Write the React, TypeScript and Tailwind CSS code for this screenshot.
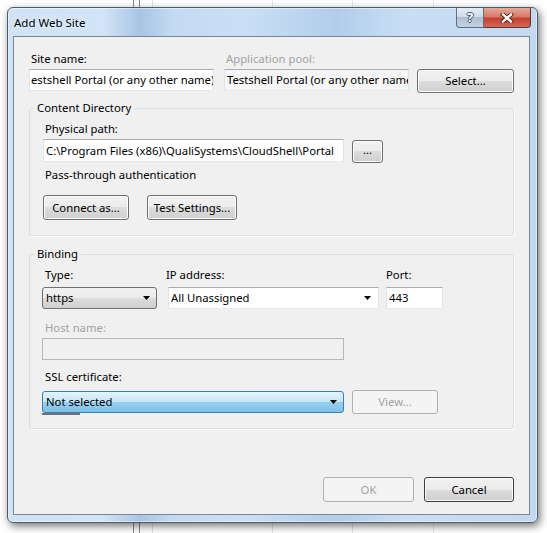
import React from 'react';

const inputBorder = 'border border-t-[#abadb3] border-x-[#e2e3ea] border-b-[#e3e9ef]';
const btn =
  'flex items-center justify-center rounded-[3px] border border-[#707070] bg-[linear-gradient(#f2f2f2,#ebebeb_50%,#dddddd_50%,#cfcfcf)] shadow-[inset_0_0_0_1px_#fcfcfc] text-black';
const btnOff = 'flex items-center justify-center rounded-[3px] border border-[#adb2b5] bg-[#f4f4f4] text-[#a3a3a3]';

const Arrow = () => (
  <svg width="7" height="4" viewBox="0 0 7 4" className="shrink-0">
    <polygon points="0,0 7,0 3.5,4" fill="#000" />
  </svg>
);

const GroupBox = ({ title, className, children }: { title: string; className: string; children: React.ReactNode }) => (
  <fieldset className={`rounded-[3px] border border-[#d5dfe5] shadow-[1px_1px_0_#ffffff] ${className}`}>
    <legend className="ml-[4px] px-[3px] leading-[16px]">{title}</legend>
    {children}
  </fieldset>
);

const AddWebSite = () => {
  return (
    <div className="flex h-full flex-col rounded-[6px] border border-[#4f5b68] bg-[linear-gradient(90deg,#cfe2f6_0%,#d2e4f7_18%,#a7c5e4_25%,#c3daf2_31%,#c9dff5_45%,#b2cdea_62%,#c8def4_75%,#c1d9f1_100%)] shadow-[2px_3px_9px_rgba(0,0,0,0.55),inset_0_0_0_1px_rgba(255,255,255,0.45)]">
      {/* title bar */}
      <div className="flex h-[28px] shrink-0 items-start justify-between pl-[6px] pr-[6px]">
        <div className="pt-[7px] text-[11.5px] leading-[16px] text-black [text-shadow:0_0_6px_#ffffff]">Add Web Site</div>
        <div className="flex">
          <div className="flex h-[20px] w-[28px] items-center justify-center rounded-bl-[4px] border border-t-0 border-[#5f6f82] bg-[linear-gradient(#e4edf6,#cdd9e6_50%,#aebfd2_50%,#c3d3e4)] text-[13px] font-bold leading-none text-white [text-shadow:1px_0_0_#43566c,-1px_0_0_#43566c,0_1px_0_#43566c,0_-1px_0_#43566c]">
            ?
          </div>
          <div className="flex h-[20px] w-[47px] items-center justify-center rounded-br-[4px] border border-l-0 border-t-0 border-[#6b3128] bg-[linear-gradient(#e8a898,#d77a69_45%,#c5402f_55%,#d2685a)]">
            <svg width="14" height="10" viewBox="0 0 14 10">
              <path d="M3 1.5 L11 8.5 M11 1.5 L3 8.5" stroke="#4a2019" strokeWidth="4.2" strokeLinecap="square" />
              <path d="M3 1.5 L11 8.5 M11 1.5 L3 8.5" stroke="#ffffff" strokeWidth="2.4" strokeLinecap="square" />
            </svg>
          </div>
        </div>
      </div>

      {/* client area */}
      <div className="ml-[5px] mr-[7px] mb-[7px] flex flex-1 flex-col border border-[#7b8794] bg-[#f0f0f0] px-[15px] pt-[14px] pb-[12px] text-[11.3px] leading-[16px] text-black">
        <div className="flex items-start">
          <div className="w-[185px]">
            <div className="pl-[2px]">Site name:</div>
            <div className={`mt-[2px] flex h-[22px] items-center overflow-hidden whitespace-nowrap bg-white pl-[1px] ${inputBorder}`}>
              estshell Portal (or any other name)
            </div>
          </div>
          <div className="ml-[10px] w-[185px]">
            <div className="pl-[2px] text-[#a3a3a3]">Application pool:</div>
            <div className={`mt-[2px] flex h-[22px] items-center overflow-hidden whitespace-nowrap bg-[#f5f5f5] pl-[2px] ${inputBorder}`}>
              Testshell Portal (or any other name)
            </div>
          </div>
          <button className={`ml-[8px] mt-[18px] h-[24px] w-[97px] ${btn}`}>Select...</button>
        </div>

        <GroupBox title="Content Directory" className="mt-[7px]">
          <div className="pl-[13px] pb-[15px]">
            <div className="mt-[5px] pl-[2px]">Physical path:</div>
            <div className="mt-[2px] flex items-start">
              <div className={`flex h-[23px] w-[301px] items-center overflow-hidden whitespace-nowrap bg-white pl-[2px] ${inputBorder}`}>
                C:\Program Files (x86)\QualiSystems\CloudShell\Portal
              </div>
              <button className={`ml-[8px] mt-[1px] h-[23px] w-[31px] pb-[3px] ${btn}`}>...</button>
            </div>
            <div className="mt-[4px] pl-[2px]">Pass-through authentication</div>
            <div className="mt-[12px] flex">
              <button className={`h-[25px] w-[86px] ${btn}`}>Connect as...</button>
              <button className={`ml-[18px] h-[25px] w-[90px] ${btn}`}>Test Settings...</button>
            </div>
          </div>
        </GroupBox>

        <GroupBox title="Binding" className="mt-[10px]">
          <div className="pl-[12px] pb-[14px]">
            <div className="mt-[5px] flex items-start">
              <div className="w-[115px]">
                <div className="pl-[3px]">Type:</div>
                <div className="mt-[4px] flex h-[22px] items-center justify-between rounded-[3px] border border-[#707070] bg-[linear-gradient(#f2f2f2,#ebebeb_50%,#dddddd_50%,#cfcfcf)] pl-[3px] pr-[6px]">
                  <span>https</span>
                  <Arrow />
                </div>
              </div>
              <div className="ml-[11px] w-[211px]">
                <div className="-ml-[2px]">IP address:</div>
                <div className={`mt-[4px] flex h-[22px] items-center justify-between bg-white pl-[2px] pr-[7px] ${inputBorder}`}>
                  <span>All Unassigned</span>
                  <Arrow />
                </div>
              </div>
              <div className="ml-[7px] w-[57px]">
                <div>Port:</div>
                <div className={`mt-[4px] flex h-[22px] items-center bg-white pl-[2px] ${inputBorder}`}>443</div>
              </div>
            </div>

            <div className="mt-[11px] pl-[3px] text-[#a3a3a3]">Host name:</div>
            <div className="mt-[2px] h-[22px] w-[302px] border border-[#b5b9bd] bg-[#f0f0f0]" />

            <div className="mt-[9px] pl-[3px]">SSL certificate:</div>
            <div className="mt-[5px] flex items-center">
              <div className="relative">
                <div className="flex h-[22px] w-[302px] items-center justify-between rounded-[3px] border border-[#3c7fb1] bg-[linear-gradient(#e5f4fc,#c4e5f6_50%,#98d1ef_50%,#7fc0e6)] pl-[3px] pr-[6px]">
                  <span>Not selected</span>
                  <Arrow />
                </div>
                <div className="absolute left-0 top-[22px] h-[2px] w-[38px] bg-[#6e7378]" />
              </div>
              <button className={`ml-[8px] h-[24px] w-[86px] ${btnOff}`}>View...</button>
            </div>
          </div>
        </GroupBox>

        <div className="mt-auto flex justify-end">
          <button className={`h-[25px] w-[91px] ${btnOff}`}>OK</button>
          <button className="ml-[10px] flex h-[25px] w-[90px] items-center justify-center rounded-[3px] border border-[#3c3c3c] bg-[linear-gradient(#f2f2f2,#ebebeb_50%,#dddddd_50%,#cfcfcf)] text-black shadow-[inset_0_0_0_1px_#fcfcfc]">
            Cancel
          </button>
        </div>
      </div>
    </div>
  );
};

const App = () => {
  return (
    <div className="relative h-[533px] w-[547px] overflow-hidden bg-white pl-[7px] pt-[7px] font-['Noto_Sans','Open_Sans',sans-serif]">
      {/* desktop behind the dialog */}
      <div className="absolute left-[133px] top-0 h-full w-px bg-[#8a8a8a]" />
      <div className="absolute left-[139px] top-0 h-full w-px bg-[#8a8a8a]" />
      <div className="absolute left-[152px] top-0 h-full w-px bg-[#e2e2e2]" />
      <div className="absolute left-[272px] top-0 h-full w-px bg-[#e6e6e6]" />
      <div className="absolute left-[352px] top-0 h-full w-px bg-[#e6e6e6]" />
      <div className="absolute left-[433px] top-0 h-full w-px bg-[#e6e6e6]" />
      <div className="relative h-[516px] w-[531px]">
        <AddWebSite />
      </div>
    </div>
  );
};

export default App;
